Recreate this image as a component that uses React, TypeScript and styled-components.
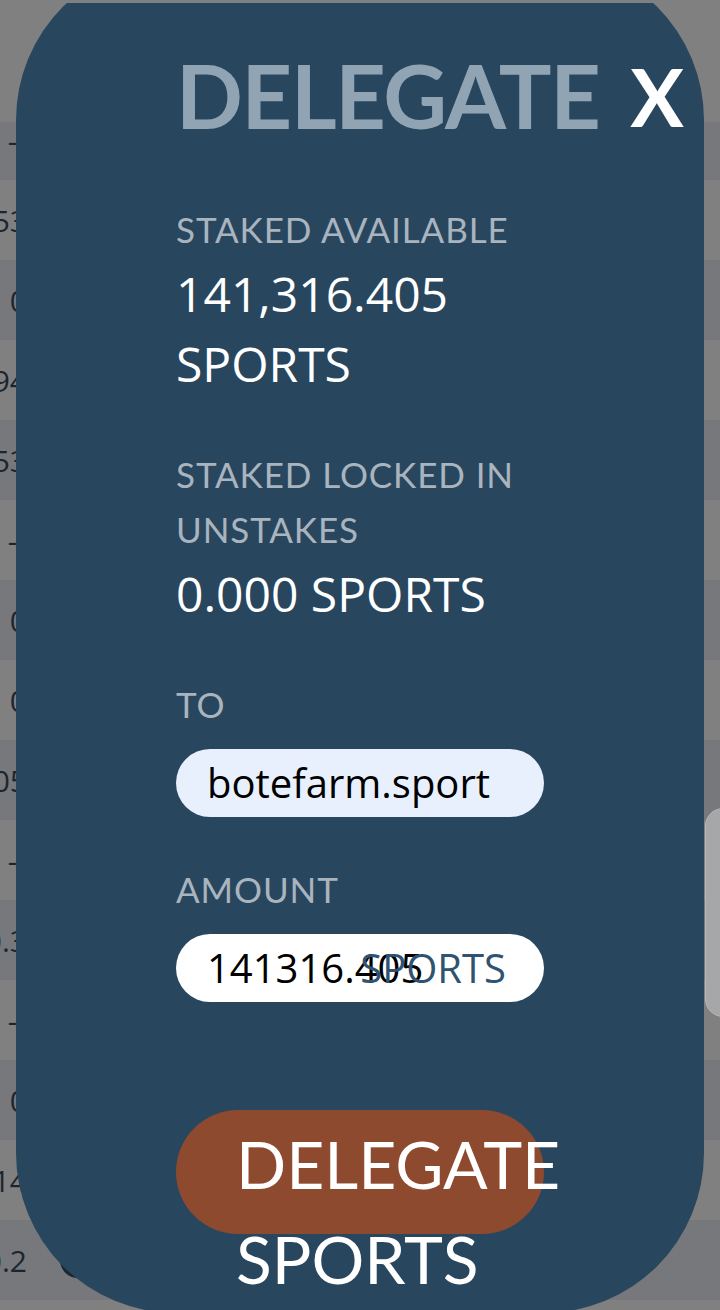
import React from 'react';
import styled, { createGlobalStyle } from 'styled-components';

const GlobalStyle = createGlobalStyle`
  html, body {
    margin: 0;
    padding: 0;
  }
  body {
    width: 720px;
    height: 1310px;
    overflow: hidden;
    background: #808080;
    font-family: "Open Sans", "Noto Sans", sans-serif;
  }
`;

const rows = ['--', '1.53', '0', '4.94', '0.53', '--', '0', '0', '1.05', '--', '0.3', '--', '0', '14', '0.2', '--'];

const App: React.FC = () => {
    return (
        <>
            <GlobalStyle />
            <Page>
                <TableHeader />
                {rows.map((value, i) => (
                    <Row key={i} $dark={i % 2 === 0} $short={i === 0}>
                        <Cell>{value}</Cell>
                        <Badge />
                    </Row>
                ))}
                <SideCard />

                <ModalClip>
                    <Modal>
                        <CloseButton>X</CloseButton>
                        <Title>DELEGATE</Title>

                        <Field>
                            <Label>STAKED AVAILABLE</Label>
                            <Value>141,316.405 SPORTS</Value>
                        </Field>

                        <Field>
                            <Label>STAKED LOCKED IN UNSTAKES</Label>
                            <Value>0.000 SPORTS</Value>
                        </Field>

                        <InputField $gap={45}>
                            <Label>TO</Label>
                            <TextInput $fill="#e8f0fe" defaultValue="botefarm.sport" />
                        </InputField>

                        <InputField $gap={0}>
                            <Label>AMOUNT</Label>
                            <InputWrap>
                                <TextInput $fill="#ffffff" defaultValue="141316.405" />
                                <Suffix>SPORTS</Suffix>
                            </InputWrap>
                        </InputField>

                        <SubmitButton>DELEGATE SPORTS</SubmitButton>
                    </Modal>
                </ModalClip>
            </Page>
        </>
    );
};

export default App;

const Page = styled.div`
    position: relative;
    width: 720px;
    height: 1310px;
    overflow: hidden;
    background: #808080;
`;

const TableHeader = styled.div`
    height: 122px;
    background: #808080;
`;

const Row = styled.div<{ $dark: boolean; $short: boolean }>`
    height: ${(p) => (p.$short ? '58px' : '80px')};
    box-sizing: border-box;
    padding-bottom: ${(p) => (p.$short ? '22px' : '0')};
    display: flex;
    align-items: center;
    background: ${(p) => (p.$dark ? '#77787b' : '#808080')};
`;

const Cell = styled.div`
    width: 27px;
    flex-shrink: 0;
    text-align: right;
    white-space: nowrap;
    direction: rtl;
    font-size: 30px;
    color: #1c2630;
`;

const Badge = styled.div`
    width: 26px;
    height: 26px;
    margin-left: 33px;
    border: 5px solid #1c2630;
    border-radius: 50%;
`;

const SideCard = styled.div`
    position: absolute;
    left: 705px;
    top: 808px;
    width: 60px;
    height: 209px;
    box-sizing: border-box;
    background: #a6a7a9;
    border: 1px solid #b6b7b9;
    border-radius: 18px;
`;

const ModalClip = styled.div`
    position: absolute;
    top: 3px;
    left: 0;
    right: 0;
    bottom: 0;
    overflow: hidden;
`;

const Modal = styled.div`
    position: relative;
    margin: -43px 16px 0;
    height: 1353px;
    box-sizing: border-box;
    padding: 83px 160px 0;
    background: #28475f;
    border-radius: 160px;
`;

const CloseButton = styled.div`
    position: absolute;
    top: 88px;
    right: 20px;
    font-family: Lato, sans-serif;
    font-weight: 700;
    font-size: 80px;
    line-height: 1.2;
    color: #ffffff;
    cursor: pointer;
`;

const Title = styled.h1`
    margin: 0 0 53px;
    font-family: Lato, sans-serif;
    font-weight: 700;
    font-size: 88px;
    line-height: 1.2;
    letter-spacing: -1.3px;
    color: #91a4b4;
    white-space: nowrap;
`;

const Field = styled.div`
    margin-bottom: 48px;
`;

const Label = styled.div`
    font-family: Lato, sans-serif;
    font-weight: 400;
    font-size: 35px;
    line-height: 55px;
    letter-spacing: 0.9px;
    color: #aab4be;
`;

const Value = styled.div`
    margin-top: 2px;
    font-family: "Open Sans", sans-serif;
    font-size: 48px;
    line-height: 70px;
    color: #ffffff;
`;

const InputField = styled.div<{ $gap: number }>`
    display: flex;
    flex-direction: column;
    gap: 17px;
    margin-bottom: ${(p) => p.$gap}px;
`;

const InputWrap = styled.div`
    position: relative;
`;

const TextInput = styled.input<{ $fill: string }>`
    display: block;
    width: 100%;
    height: 68px;
    box-sizing: border-box;
    padding: 0 31px;
    border: none;
    outline: none;
    border-radius: 34px;
    background: ${(p) => p.$fill};
    font-family: "Open Sans", sans-serif;
    font-size: 40px;
    color: #000000;
`;

const Suffix = styled.span`
    position: absolute;
    top: 0;
    right: 38px;
    line-height: 68px;
    font-family: "Open Sans", sans-serif;
    font-size: 40px;
    color: #2f5370;
    pointer-events: none;
`;

const SubmitButton = styled.button`
    display: flex;
    align-items: flex-start;
    justify-content: flex-start;
    width: 100%;
    height: 124px;
    box-sizing: border-box;
    margin-top: 108px;
    padding: 6px 0 0 60px;
    border: none;
    border-radius: 62px;
    background: #8e4a2f;
    font-family: Lato, sans-serif;
    font-weight: 400;
    font-size: 66px;
    line-height: 95px;
    text-align: left;
    color: #ffffff;
    cursor: pointer;
`;
